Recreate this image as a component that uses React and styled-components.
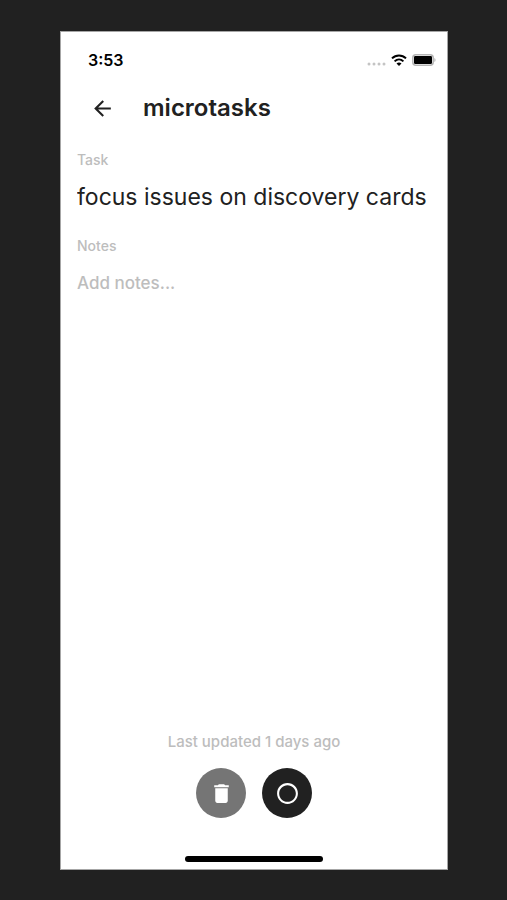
import React, { useState } from "react";
import styled, { createGlobalStyle } from "styled-components";
import { MdArrowBack, MdDelete, MdRadioButtonUnchecked } from "react-icons/md";

const StatusBar = () => {
  return (
    <Status>
      <span className="time">3:53</span>
      <div className="indicators">
        <svg width="19" height="4" viewBox="0 0 19 4" className="signal">
          <circle cx="2" cy="2" r="1.5" />
          <circle cx="7" cy="2" r="1.5" />
          <circle cx="12" cy="2" r="1.5" />
          <circle cx="17" cy="2" r="1.5" />
        </svg>
        <svg width="16" height="12" viewBox="0 0 16 12" className="wifi">
          <path d="M1 4.4C5 0.4 11 0.4 15 4.4" />
          <path d="M3.6 7.4C6.2 4.9 9.8 4.9 12.4 7.4" />
          <path d="M8 12L5.5 9.5C7 8.1 9 8.1 10.5 9.5Z" className="dot" />
        </svg>
        <svg width="24" height="12" viewBox="0 0 24 12">
          <rect x="0.8" y="0.8" width="20.4" height="10.4" rx="3" fill="#fff" stroke="#b5b5b5" strokeWidth="1.5" />
          <rect x="2" y="2" width="18" height="8" rx="1.2" fill="#000" />
          <path d="M22.3 4C24 4.6 24 7.4 22.3 8Z" fill="#b5b5b5" />
        </svg>
      </div>
    </Status>
  );
};

const App = () => {
  const [task, setTask] = useState("focus issues on discovery cards");
  const [notes, setNotes] = useState("");

  return (
    <>
      <GlobalStyle />
      <Page>
        <Phone>
          <StatusBar />
          <Header>
            <BackButton type="button" aria-label="Back">
              <MdArrowBack size={25} />
            </BackButton>
            <h1>microtasks</h1>
          </Header>
          <Form>
            <Label htmlFor="task">Task</Label>
            <TaskInput
              id="task"
              type="text"
              value={task}
              onChange={(e) => setTask(e.target.value)}
            />
            <Label htmlFor="notes">Notes</Label>
            <NotesInput
              id="notes"
              placeholder="Add notes..."
              value={notes}
              onChange={(e) => setNotes(e.target.value)}
            />
          </Form>
          <Footer>
            <p>Last updated 1 days ago</p>
            <div className="actions">
              <RoundButton type="button" aria-label="Delete task" $color="#757575">
                <MdDelete size={25} />
              </RoundButton>
              <RoundButton type="button" aria-label="Complete task" $color="#212121">
                <MdRadioButtonUnchecked size={25} />
              </RoundButton>
            </div>
          </Footer>
          <HomeIndicator />
        </Phone>
      </Page>
    </>
  );
};

const GlobalStyle = createGlobalStyle`
  * {
    box-sizing: border-box;
  }
  body {
    margin: 0;
    background: #212121;
    font-family: Inter, "Liberation Sans", sans-serif;
    color: #212121;
  }
  input, textarea, button {
    font-family: inherit;
    color: inherit;
    border: none;
    outline: none;
    padding: 0;
    margin: 0;
    background: none;
  }
`;

const Page = styled.div`
  min-height: 100vh;
  display: flex;
  padding: 31px 59px 30px 60px;
`;

const Phone = styled.main`
  flex: 1;
  min-width: 0;
  display: flex;
  flex-direction: column;
  background: #fff;
  border: 1px solid #a6a6a6;
`;

const Status = styled.div`
  display: flex;
  justify-content: space-between;
  align-items: center;
  padding: 18px 11px 0 27px;

  .time {
    font-size: 16px;
    line-height: 20px;
    font-weight: 600;
    color: #000;
  }
  .indicators {
    display: flex;
    align-items: center;
    gap: 5px;
  }
  .signal {
    align-self: flex-end;
    fill: #c4c4c4;
  }
  .wifi {
    fill: none;
    stroke: #000;
    stroke-width: 2;
  }
  .dot {
    fill: #000;
    stroke: none;
  }
`;

const Header = styled.header`
  display: flex;
  align-items: center;
  gap: 20px;
  padding: 16px 16px 0 20px;

  h1 {
    margin: 0;
    font-size: 24px;
    line-height: 44px;
    font-weight: 600;
  }
`;

const BackButton = styled.button`
  width: 42px;
  height: 44px;
  display: flex;
  align-items: center;
  justify-content: center;
  cursor: pointer;
`;

const Form = styled.form`
  flex: 1;
  display: flex;
  flex-direction: column;
  padding: 21px 16px 0;
`;

const Label = styled.label`
  font-size: 14px;
  line-height: 18px;
  font-weight: 500;
  color: #bdbdbd;
`;

const TaskInput = styled.input`
  width: 100%;
  height: 36px;
  margin: 10px 0 22px;
  font-size: 23px;
  font-weight: 400;
`;

const NotesInput = styled.textarea`
  flex: 1;
  width: 100%;
  margin-top: 16px;
  font-size: 17px;
  line-height: 24px;
  font-weight: 500;
  resize: none;

  &::placeholder {
    color: #bdbdbd;
  }
`;

const Footer = styled.footer`
  display: flex;
  flex-direction: column;
  align-items: center;
  gap: 16px;

  p {
    margin: 0;
    font-size: 15px;
    line-height: 20px;
    font-weight: 500;
    color: #bdbdbd;
  }
  .actions {
    display: flex;
    gap: 16px;
  }
`;

const RoundButton = styled.button`
  width: 50px;
  height: 50px;
  display: flex;
  align-items: center;
  justify-content: center;
  border-radius: 50%;
  background: ${({ $color }) => $color};
  color: #fff;
  cursor: pointer;
`;

const HomeIndicator = styled.div`
  width: 36%;
  height: 6px;
  margin: 38px auto 7px;
  border-radius: 3px;
  background: #000;
`;

export default App;
